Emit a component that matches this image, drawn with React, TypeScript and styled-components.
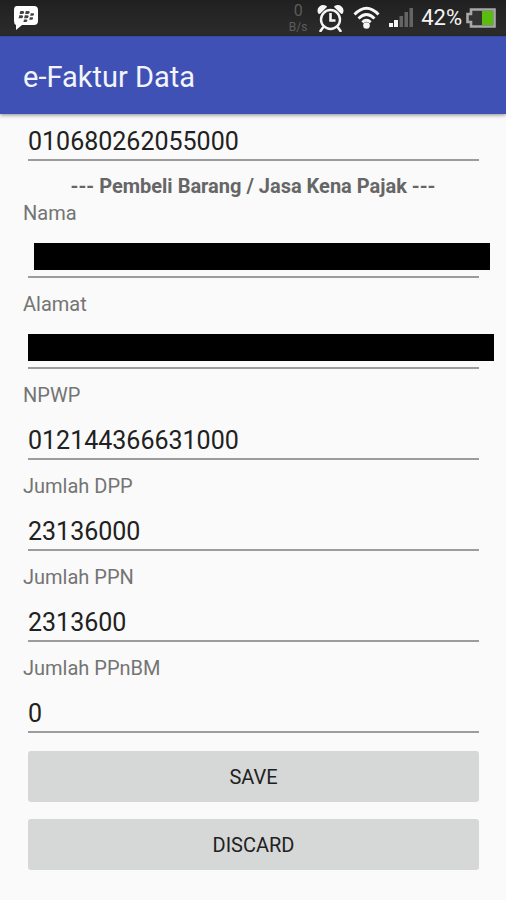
import React, { useState } from "react";
import styled, { createGlobalStyle } from "styled-components";

const GlobalStyle = createGlobalStyle`
  *, *::before, *::after { box-sizing: border-box; }
  body {
    margin: 0;
    background: #fafafa;
    font-family: Roboto, "Liberation Sans", sans-serif;
  }
`;

const Screen = styled.div`
  min-height: 100vh;
  display: flex;
  flex-direction: column;
`;

const StatusBar = styled.div`
  display: flex;
  align-items: center;
  justify-content: space-between;
  height: 36px;
  padding: 0 9px 0 12px;
  background: linear-gradient(#202020, #2c2c2c);
`;

const StatusIcons = styled.div`
  display: flex;
  align-items: center;
  height: 36px;
`;

const NetworkSpeed = styled.div`
  display: flex;
  flex-direction: column;
  align-items: center;
  width: 22px;
  margin-right: 8px;
  color: #5c5c5c;
  font-size: 12px;
  line-height: 14px;
`;

const SpeedValue = styled.span`
  font-size: 16px;
  line-height: 18px;
`;

const BatteryLevel = styled.span`
  margin: 0 3px 0 7px;
  color: #f4f4f4;
  font-size: 22px;
  line-height: 36px;
`;

const Glyph = styled.svg<{ $gap?: number }>`
  display: block;
  flex: none;
  margin-right: ${(p) => p.$gap ?? 0}px;
`;

const AppBar = styled.header`
  position: relative;
  display: flex;
  align-items: center;
  height: 78px;
  padding: 0 23px;
  border-top: 1px solid #3848a4;
  background: #3f51b5;
  box-shadow: 0 1px 4px rgba(0, 0, 0, 0.45);
`;

const Title = styled.h1`
  margin: 0;
  padding-top: 2px;
  color: #f3f4fc;
  font-size: 29px;
  font-weight: 400;
  line-height: 32px;
`;

const Form = styled.form`
  display: flex;
  flex-direction: column;
  padding: 0 23px 30px;
`;

const TextInput = styled.input`
  display: block;
  width: 100%;
  padding: 0;
  border: 0;
  border-bottom: 2px solid #9c9c9c;
  border-radius: 0;
  outline: 0;
  background: transparent;
  color: #212121;
  font: inherit;
  font-size: 25px;
  line-height: 36px;
  height: 38px;

  &:focus {
    border-bottom-color: #3f51b5;
  }
`;

const TopField = styled.div`
  padding: 9px 4px 0 5px;
`;

const SectionTitle = styled.h2`
  margin: 13px 0 3px;
  color: #666;
  font-size: 20px;
  font-weight: 700;
  line-height: 24px;
  text-align: center;
`;

const Field = styled.div`
  height: 91px;
`;

const Label = styled.label`
  display: block;
  color: #747474;
  font-size: 20px;
  line-height: 24px;
`;

const InputWrap = styled.div`
  position: relative;
  padding: 15px 4px 0 5px;
`;

const Redaction = styled.span<{ $left: number; $right: number }>`
  position: absolute;
  top: 18px;
  left: ${(p) => p.$left}px;
  right: ${(p) => p.$right}px;
  height: 27px;
  background: #000;
`;

const Actions = styled.div`
  display: flex;
  flex-direction: column;
  gap: 17px;
  padding: 4px 4px 0 5px;
`;

const ActionButton = styled.button`
  height: 51px;
  border: 0;
  border-radius: 3px;
  background: #d6d7d7;
  color: #212121;
  font: inherit;
  font-size: 20px;
  line-height: 24px;
  cursor: pointer;

  &:active {
    background: #c4c5c5;
  }
`;

const MessengerIcon = () => (
  <Glyph width="28" height="26" viewBox="0 0 28 26" aria-hidden="true">
    <path
      d="M5 1h17q4 0 4 4v11q0 4-4 4H10l-6 5v-5q-2-1-2-4V5q0-4 3-4z"
      fill="#fff"
    />
    <g fill="#444">
      <path d="M8.300 6h2.600q1.600 0 1.200 1.500T10.300 9H7.600z" />
      <path d="M13.800 6h2.600q1.600 0 1.200 1.500T15.800 9h-2.700z" />
      <path d="M7.300 10.300h2.600q1.600 0 1.200 1.500t-1.800 1.500H6.600z" />
      <path d="M12.800 10.300h2.600q1.600 0 1.200 1.500t-1.800 1.500h-2.700z" />
      <path d="M18.800 8.200h2.200q1.300 0 1 1.300t-1.700 1.300h-2.200z" />
      <path d="M17.900 12.200h2.200q1.300 0 1 1.300t-1.700 1.300h-2.200z" />
      <path d="M12 14.500h2.400q1.300 0 1 1.300t-1.700 1.300h-2.300z" />
    </g>
  </Glyph>
);

const AlarmIcon = () => (
  <Glyph $gap={9} width="27" height="28" viewBox="0 0 27 28" aria-hidden="true">
    <g fill="none" stroke="#f6f6f6" strokeLinecap="round">
      <circle cx="13.500" cy="15.500" r="9.500" strokeWidth="2.400" />
      <path d="M13.500 9v7.500h5" strokeWidth="2.600" strokeLinecap="butt" />
      <path d="M6 23.500 3.500 27M21 23.500l2.500 3.500" strokeWidth="2.600" />
    </g>
    <path
      d="M1 9Q-.5 5 2.500 2.500T9.500 2q.8.900-.3 1.700L3.300 9.500Q1.800 10.500 1 9zM26 9q1.500-4-1.500-6.500T17.500 2q-.8.900.3 1.700l5.900 5.800q1.500 1 2.300-.5z"
      fill="#f6f6f6"
    />
  </Glyph>
);

const WifiIcon = () => (
  <Glyph $gap={8} width="28" height="24" viewBox="0 0 28 24" aria-hidden="true">
    <g fill="none" stroke="#f6f6f6" strokeWidth="2.800">
      <path d="M1.500 8.500q12-12.500 24 0" />
      <path d="M5.500 12.500q8-8 16 0" />
      <path d="M9.300 16.200q4.200-4 8.400 0" />
    </g>
    <circle cx="13.500" cy="19.500" r="3.300" fill="#f6f6f6" />
  </Glyph>
);

const SignalIcon = () => (
  <Glyph width="25" height="20" viewBox="0 0 25 20" aria-hidden="true">
    <path d="M0 15h4v4H0zM5 12h4v7H5z" fill="#f6f6f6" />
    <path d="M10.500 8h3.500v11h-3.500zM15.500 4H19v15h-3.500zM20.500 0H24v19h-3.500z" fill="#646464" />
  </Glyph>
);

const BatteryIcon = () => (
  <Glyph width="32" height="20" viewBox="0 0 32 20" aria-hidden="true">
    <path
      d="M6 1.500h23.500v17H6V14H2.500V6H6z"
      fill="#333"
      stroke="#a8a8a8"
      strokeWidth="2.600"
    />
    <path d="M17 3h11v14H17z" fill="#58bd0c" />
  </Glyph>
);

type FieldSpec = {
  id: string;
  label: string;
  value: string;
  redaction?: { left: number; right: number };
};

const buyerFields: FieldSpec[] = [
  { id: "nama", label: "Nama", value: "", redaction: { left: 11, right: -7 } },
  { id: "alamat", label: "Alamat", value: "", redaction: { left: 5, right: -11 } },
  { id: "npwp", label: "NPWP", value: "012144366631000" },
  { id: "dpp", label: "Jumlah DPP", value: "23136000" },
  { id: "ppn", label: "Jumlah PPN", value: "2313600" },
  { id: "ppnbm", label: "Jumlah PPnBM", value: "0" },
];

const BuyerField = ({ id, label, value, redaction }: FieldSpec) => {
  const [text, setText] = useState(value);
  return (
    <Field>
      <Label htmlFor={id}>{label}</Label>
      <InputWrap>
        <TextInput
          id={id}
          value={text}
          readOnly={Boolean(redaction)}
          onChange={(e) => setText(e.target.value)}
        />
        {redaction && <Redaction $left={redaction.left} $right={redaction.right} />}
      </InputWrap>
    </Field>
  );
};

export default function App() {
  return (
    <>
      <GlobalStyle />
      <Screen>
        <StatusBar>
          <MessengerIcon />
          <StatusIcons>
            <NetworkSpeed>
              <SpeedValue>0</SpeedValue>
              <span>B/s</span>
            </NetworkSpeed>
            <AlarmIcon />
            <WifiIcon />
            <SignalIcon />
            <BatteryLevel>42%</BatteryLevel>
            <BatteryIcon />
          </StatusIcons>
        </StatusBar>
        <AppBar>
          <Title>e-Faktur Data</Title>
        </AppBar>
        <Form onSubmit={(e) => e.preventDefault()}>
          <TopField>
            <TextInput aria-label="NPWP Penjual" defaultValue="010680262055000" />
          </TopField>
          <SectionTitle>--- Pembeli Barang / Jasa Kena Pajak ---</SectionTitle>
          {buyerFields.map((field) => (
            <BuyerField key={field.id} {...field} />
          ))}
          <Actions>
            <ActionButton type="submit">SAVE</ActionButton>
            <ActionButton type="button">DISCARD</ActionButton>
          </Actions>
        </Form>
      </Screen>
    </>
  );
}
